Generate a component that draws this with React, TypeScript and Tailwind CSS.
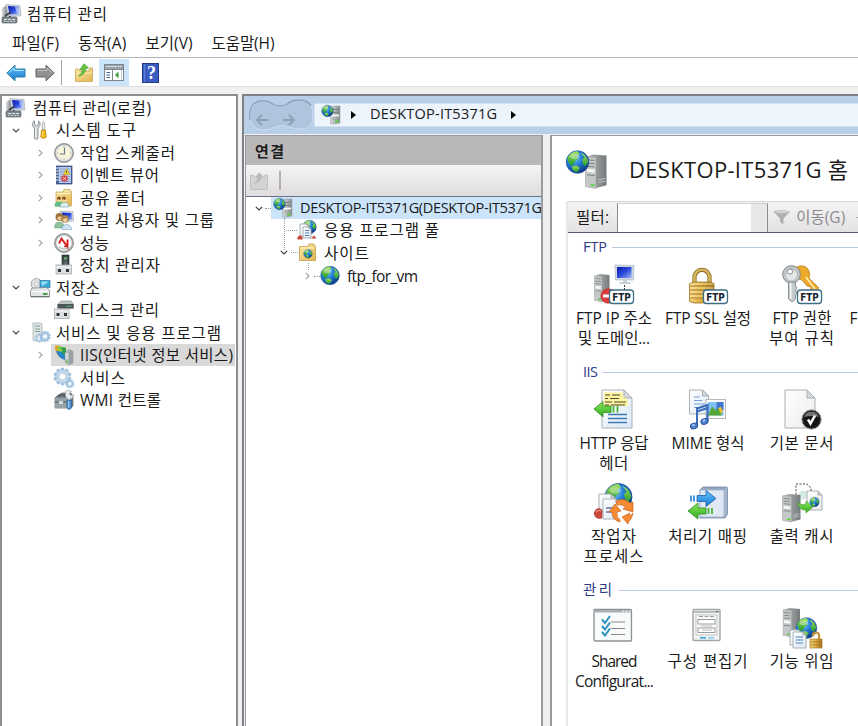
import React, { useLayoutEffect, useRef, useState } from "react";

/* ---------- text ---------- */

function Fit({ text, w, className = "" }: { text: string; w: number; className?: string }) {
  const ref = useRef<HTMLSpanElement>(null);
  const [spacing, setSpacing] = useState(0);
  useLayoutEffect(() => {
    if (ref.current && text.length > 1) {
      setSpacing((w + 1 - ref.current.getBoundingClientRect().width) / (text.length - 1));
    }
  }, [text, w]);
  return (
    <span ref={ref} className={"inline-block whitespace-pre " + className} style={{ letterSpacing: spacing }}>
      {text}
    </span>
  );
}

/* ---------- shared drawing parts ---------- */

function Defs() {
  return (
    <svg className="absolute h-0 w-0" aria-hidden="true">
      <defs>
        <radialGradient id="sea" cx="35%" cy="30%" r="75%">
          <stop offset="0" stopColor="#8fd8ff" />
          <stop offset=".45" stopColor="#2680d8" />
          <stop offset="1" stopColor="#0c3384" />
        </radialGradient>
        <linearGradient id="land" x1="0" y1="0" x2="0" y2="1">
          <stop offset="0" stopColor="#a4e05a" />
          <stop offset="1" stopColor="#1f9a32" />
        </linearGradient>
        <linearGradient id="steel" x1="0" y1="0" x2="1" y2="0">
          <stop offset="0" stopColor="#d9dcdc" />
          <stop offset="1" stopColor="#84898a" />
        </linearGradient>
        <linearGradient id="steelDark" x1="0" y1="0" x2="1" y2="0">
          <stop offset="0" stopColor="#b9bdbd" />
          <stop offset="1" stopColor="#747a7b" />
        </linearGradient>
        <linearGradient id="screen" x1="0" y1="0" x2="1" y2="1">
          <stop offset="0" stopColor="#0a1aa8" />
          <stop offset=".5" stopColor="#2b49dc" />
          <stop offset="1" stopColor="#9db8f8" />
        </linearGradient>
        <linearGradient id="brass" x1="0" y1="0" x2="1" y2="0">
          <stop offset="0" stopColor="#f3d684" />
          <stop offset=".5" stopColor="#d9a840" />
          <stop offset="1" stopColor="#a3741c" />
        </linearGradient>
        <linearGradient id="folder" x1="0" y1="0" x2="1" y2="1">
          <stop offset="0" stopColor="#fbe9a6" />
          <stop offset="1" stopColor="#e3b54e" />
        </linearGradient>
        <linearGradient id="greenArrow" x1="0" y1="0" x2="0" y2="1">
          <stop offset="0" stopColor="#8be85a" />
          <stop offset="1" stopColor="#2fa81e" />
        </linearGradient>
        <linearGradient id="blueArrow" x1="0" y1="0" x2="0" y2="1">
          <stop offset="0" stopColor="#63c4fa" />
          <stop offset="1" stopColor="#1778d2" />
        </linearGradient>
        <linearGradient id="paper" x1="0" y1="0" x2="1" y2="1">
          <stop offset="0" stopColor="#ffffff" />
          <stop offset="1" stopColor="#dbe9f6" />
        </linearGradient>
        <linearGradient id="blank" x1="0" y1="0" x2="1" y2="1">
          <stop offset="0" stopColor="#ffffff" />
          <stop offset="1" stopColor="#ececec" />
        </linearGradient>
      </defs>
    </svg>
  );
}

function Svg({ s, children }: { s: number; children: React.ReactNode }) {
  return (
    <svg width={s} height={s} viewBox={`0 0 ${s} ${s}`} className="block shrink-0 overflow-visible">
      {children}
    </svg>
  );
}

function Globe({ x, y, r }: { x: number; y: number; r: number }) {
  return (
    <g transform={`translate(${x} ${y}) scale(${r / 10})`}>
      <circle r="10" fill="url(#sea)" stroke="#1d4f96" strokeWidth=".6" />
      <path d="M-9-3C-8-7-4-9.500 0-9.600L2-7-1-5 1-3-2-1-3 2-6 3-8 0Z" fill="url(#land)" />
      <path d="M3-8C7-7 9-3 9.500 0L7 4 5 2 4-2 6-4Z" fill="url(#land)" />
      <path d="M-5 4-1 3 2 5 0 9C-3 9-5 7-5 4Z" fill="url(#land)" />
      <ellipse cx="-2.500" cy="-5" rx="4" ry="2.500" fill="#fff" opacity=".35" />
    </g>
  );
}

function Doc({ x, y, w, h, fill = "url(#paper)", c = 6 }: { x: number; y: number; w: number; h: number; fill?: string; c?: number }) {
  return (
    <g transform={`translate(${x} ${y})`} stroke="#a2a8ad" strokeWidth=".9" strokeLinejoin="round">
      <path d={`M0 0H${w - c}L${w} ${c}V${h}H0Z`} fill={fill} />
      <path d={`M${w - c} 0V${c}H${w}Z`} fill="#d6dadd" />
    </g>
  );
}

function Tower({ x, y, w, h }: { x: number; y: number; w: number; h: number }) {
  return (
    <g transform={`translate(${x} ${y}) scale(${w / 16} ${h / 32})`}>
      <path d="M0 2 6 0 16 1V29L7 32 0 30Z" fill="url(#steelDark)" />
      <path d="M0 2 8 3V32L0 30Z" fill="#c5c8c8" stroke="#9a9f9f" strokeWidth=".4" />
      <path d="M1 5l6 .7M1 8l6 .7M1 11l6 .7M1 19l6 .7" stroke="#7d8384" strokeWidth=".9" />
      <path d="M1 13.500l6 .7v3l-6-.7z" fill="#f6f6f6" />
      <path d="M10 24l5-1.500M10 26.500l5-1.500" stroke="#d1d6d6" strokeWidth=".7" />
      <rect x="4" y="28" width="3" height="1.800" fill="#54d43c" />
    </g>
  );
}

function FtpBadge({ x, y }: { x: number; y: number }) {
  return (
    <g>
      <rect x={x} y={y} width="24" height="13.500" rx="3" fill="#fff" stroke="#3d6e86" strokeWidth="1.300" />
      <text x={x + 12} y={y + 10.500} textAnchor="middle" fontFamily="DejaVu Sans, sans-serif" fontWeight="bold" fontSize="10" textLength="18.500" lengthAdjust="spacingAndGlyphs" fill="#14222c">
        FTP
      </text>
    </g>
  );
}

function Gear({ x, y, r, c = "#c3dbee" }: { x: number; y: number; r: number; c?: string }) {
  const teeth = [0, 36, 72, 108, 144, 180, 216, 252, 288, 324];
  return (
    <g transform={`translate(${x} ${y}) scale(${r / 10})`}>
      {teeth.map((a) => (
        <rect key={a} x="-1.800" y="-11" width="3.600" height="4" rx=".8" transform={`rotate(${a})`} fill="#a9c9e2" stroke="#7fa6c8" strokeWidth=".6" />
      ))}
      <circle r="6.500" fill="#fff" stroke={c} strokeWidth="4" />
      <circle r="8.600" fill="none" stroke="#8fb2d0" strokeWidth=".7" />
      <circle r="4.400" fill="#fff" stroke="#8fb2d0" strokeWidth=".8" />
    </g>
  );
}

/* ---------- 20px icons ---------- */

const ComputerIcon = () => (
  <Svg s={20}>
    <path d="M0 4 5 1V13H0Z" fill="url(#steel)" />
    <path d="M4 .5 18 1.500 19 12 6 12Z" fill="#d3d9e1" stroke="#9aa6b3" strokeWidth=".6" />
    <path d="M6 2 16.500 2.800 17.300 10.300 7.500 10.500Z" fill="url(#screen)" />
    <path d="M13 3l3.700.3.500 6.500-2 .2Z" fill="#b9ccff" opacity=".8" />
    <path d="M8 12 7 16M9 8 3 12" stroke="#3a4248" strokeWidth="2" />
    <rect x="0" y="13" width="15" height="6" rx="1" fill="#7e888f" stroke="#4b555c" strokeWidth=".6" />
    <path d="M2 15.500h3M6 15.500h3M10 15.500h3" stroke="#e0e4e6" />
    <path d="M2 17.500h11" stroke="#c4cacc" strokeDasharray="2 1" />
  </Svg>
);
const ToolsIcon = () => (
  <Svg s={20}>
    <path d="M4.500.8C1.500 2.500 2 7 4.500 8V18.500q1.800 1.500 3.500 0V8C10.500 6.500 11 2.500 8.500.8V4.500L6.400 5.500 4.500 4.500Z" fill="#d3d6d8" stroke="#7c8388" strokeWidth=".8" />
    <path d="M5.800 8v10" stroke="#f7f8f8" />
    <path d="M13.500 1.500 14.700 3V10h-2.400V3Z" fill="#e8ebec" stroke="#8a9094" strokeWidth=".6" />
    <path d="M11.500 10h4l.8 7q-2.800 3-5.600 0Z" fill="#f2b51c" stroke="#b87c08" strokeWidth=".7" />
    <path d="M12.800 11v6" stroke="#ffe38a" />
  </Svg>
);
const ClockIcon = () => (
  <Svg s={20}>
    <circle cx="10" cy="10" r="9.500" fill="#a3a7aa" stroke="#7c8184" strokeWidth=".8" />
    <circle cx="10" cy="10" r="7.600" fill="#f8f5da" stroke="#dfe1e2" strokeWidth="1.500" />
    <path d="M10.500 4.500V11H5.800" fill="none" stroke="#6c7a8e" strokeWidth="1.200" />
    <path d="M10 3v1.500M17 10h-1.500M10 17v-1.500M3 10h1" stroke="#999" strokeWidth=".8" />
  </Svg>
);
const EventIcon = () => (
  <Svg s={20}>
    <rect x="2.500" y="1" width="15.500" height="18" fill="#48659c" stroke="#2a4475" strokeWidth=".7" />
    <rect x="5" y="2" width="12" height="16" fill="#b9caea" />
    <path d="M6 4h10M6 6.500h10M6 9h10M6 11.500h10M6 14h10M6 16.500h10" stroke="#7f9ace" strokeWidth=".8" />
    <path d="M2 3h3M2 6h3M2 9h3M2 12h3M2 15h3" stroke="#e8e8e8" strokeWidth="1.200" />
    <path d="M12.500 3.500 15.500 9.500H9.500Z" fill="#f7d32b" stroke="#c7a32a" strokeWidth=".6" />
    <path d="M12.500 5.500v2.500" stroke="#444" strokeWidth=".8" />
    <circle cx="10.500" cy="13.500" r="3.200" fill="#d44545" />
    <path d="M9.200 12.200l2.600 2.600M11.800 12.200l-2.600 2.600" stroke="#fff" strokeWidth=".9" />
  </Svg>
);
const SharedIcon = () => (
  <Svg s={20}>
    <path d="M2 4H9l1-2.500h6l1.500 2.500V18H2Z" fill="url(#folder)" stroke="#c49f4c" strokeWidth=".7" />
    <path d="M3 5.500h14M11 3h5" stroke="#fff7d5" />
    <circle cx="5" cy="10.500" r="2" fill="#8a5524" />
    <circle cx="10" cy="10.500" r="2" fill="#8a5524" />
    <path d="M4 11.500q1.500 3 3 0M9 11.500q1.500 3 3 0" stroke="#fbe0b0" strokeWidth="1.500" fill="none" />
    <path d="M.5 18.500q0-5 4.500-5t4.500 5Z" fill="#5ebd8a" />
    <path d="M6 19q0-4.500 4.500-4.500T15 19Z" fill="#dff0f0" stroke="#6aa6a0" strokeWidth=".6" />
  </Svg>
);
const UsersIcon = () => (
  <Svg s={20}>
    <path d="M6 1 19 1.500 19.500 11 8 12Z" fill="#d3d9e1" stroke="#9aa6b3" strokeWidth=".6" />
    <path d="M8 2.500 17.500 3l.5 6.500L9 10.500Z" fill="url(#screen)" />
    <circle cx="5.500" cy="7" r="4" fill="#9a7440" />
    <path d="M3 8q2.500 5 5 0L7.500 6.500H4.500Z" fill="#ecc592" />
    <circle cx="11" cy="9" r="3.800" fill="#a8834a" />
    <path d="M8.500 9.500q2.500 6 5 0L12.500 8Z" fill="#f0d0a0" />
    <path d="M.5 18q0-6 4.500-6t6 6Z" fill="#8cc29d" stroke="#5d9a70" strokeWidth=".5" />
    <path d="M8 19.500Q8 14.500 12.500 14.500t5.500 5Z" fill="#cfe4f2" stroke="#7ba4bf" strokeWidth=".6" />
  </Svg>
);
const PerfIcon = () => (
  <Svg s={20}>
    <circle cx="10" cy="10" r="9.500" fill="#a5aaac" stroke="#84898c" strokeWidth=".8" />
    <circle cx="10" cy="10" r="7.500" fill="#fdfdfd" stroke="#dfe1e2" />
    <path d="M5 10.500 7.500 5.500 13.500 14V6.500" fill="none" stroke="#d81e1e" strokeWidth="1.900" />
    <path d="M10 13.500h4" stroke="#d81e1e" strokeWidth="1.300" />
    <path d="M5 14q5 4 10 0" stroke="#9fb3a2" fill="none" />
  </Svg>
);
const DeviceIcon = () => (
  <Svg s={20}>
    <rect x="8" y="0" width="7" height="11" fill="#3b4447" stroke="#23292b" strokeWidth=".6" />
    <rect x="10" y="2" width="3" height="3" fill="#5f9a6a" />
    <path d="M9.500 7h4M9.500 9h4" stroke="#7d8786" />
    <rect x="2" y="10" width="15.500" height="9" fill="#dcdfe0" stroke="#a5aaad" strokeWidth=".8" />
    <path d="M2 12h15.500" stroke="#f8f8f8" />
    <rect x="4" y="14" width="3" height="3" fill="#30363a" />
    <rect x="12" y="14" width="3" height="3" fill="#30363a" />
  </Svg>
);
const StorageIcon = () => (
  <Svg s={20}>
    <circle cx="6.500" cy="6" r="5.500" fill="#dde0de" stroke="#989d9b" strokeWidth=".8" />
    <circle cx="6.500" cy="6" r="1.700" fill="#fff" stroke="#aaa" strokeWidth=".6" />
    <rect x="10" y="2.500" width="10" height="7" fill="#39a9dd" stroke="#23749e" strokeWidth=".7" />
    <path d="M11 3.500h8L12 8Z" fill="#9ddcf5" />
    <path d="M2 10 17 9.500 19.500 13V18.500H.5V13Z" fill="#e3e6e6" stroke="#7f8789" strokeWidth=".8" />
    <path d="M1 13.500h18" stroke="#fff" />
    <path d="M1 18.800h18.500" stroke="#5d6769" />
    <rect x="13" y="15" width="4.500" height="2" fill="#43a04b" />
  </Svg>
);
const DiskIcon = () => (
  <Svg s={20}>
    <path d="M4 4 7 1H17L19.500 4V8H4Z" fill="#c0c6c6" stroke="#8b9494" strokeWidth=".7" />
    <rect x="3.500" y="4" width="16" height="4.500" fill="#4b5556" />
    <path d="M12 6.200h5.500" stroke="#58a070" strokeWidth="1.300" />
    <rect x=".5" y="9" width="14.500" height="9.500" fill="#dcdfe0" stroke="#a5aaad" strokeWidth=".8" />
    <path d="M.5 11H15" stroke="#f8f8f8" />
    <rect x="2.500" y="13" width="3" height="3" fill="#30363a" />
    <rect x="10" y="13" width="3" height="3" fill="#30363a" />
  </Svg>
);
const AppsIcon = () => (
  <Svg s={20}>
    <path d="M3 0h8l1 1V17l-8 1-1-1Z" fill="#dfe5e6" stroke="#9caaad" strokeWidth=".7" />
    <path d="M5 3h5M5 6h5M5 8.500h5" stroke="#78a18f" />
    <Gear x={9.500} y={15} r={4} />
    <Gear x={15} y={13.500} r={5} c="#a9cae4" />
  </Svg>
);
const IisIcon = () => (
  <Svg s={20}>
    <path d="M1 1 5 0 6 12Q1 9 1 1Z" fill="#e89c2b" />
    <path d="M3 1 12 2.500V8L4 7Z" fill="#8ccc3a" />
    <path d="M2 6 11 7V15Q4 13 2 6Z" fill="#2586cb" />
    <path d="M5 2q5 2 3 7l4 1V3Z" fill="#2d9c50" />
    <path d="M11 8 15 4.500l4 2V18l-5 2-3-3Z" fill="url(#steel)" stroke="#8c9496" strokeWidth=".6" />
    <path d="M15 7l4-1V18l-4 2Z" fill="#9aa1a3" />
    <path d="M12 9l2.500 1M12 12l2.500 1" stroke="#f2f2f2" />
    <rect x="12" y="15.500" width="2" height="2" fill="#5dc648" />
  </Svg>
);
const ServicesIcon = () => (
  <Svg s={20}>
    <Gear x={8.500} y={8.500} r={7.800} />
    <Gear x={15.800} y={15.800} r={3.900} c="#a9cae4" />
  </Svg>
);
const WmiIcon = () => (
  <Svg s={20}>
    <path d="M3 6 8 3h9l2 3V16L16 18H1V8Z" fill="#76828a" stroke="#5a656c" strokeWidth=".7" />
    <path d="M1 8h14v10H1Z" fill="#97a2a8" />
    <path d="M1 12h14" stroke="#4c565c" />
    <rect x="5" y="11" width="4" height="3" fill="#d4dadd" />
    <path d="M5 7V5h6v2" fill="none" stroke="#3d454a" />
    <path d="M11.500 1.500q3-3 6 0l-2 2 1 2 3-1q0 4-3 4v3h-2.500V9q-3.500-2-2.500-5Z" fill="#e9eced" stroke="#8d9498" strokeWidth=".6" />
    <path d="M13 10h4.500v8q-2.200 3-4.500 0Z" fill="#4a89cc" stroke="#285b94" strokeWidth=".6" />
    <path d="M14.700 11v7" stroke="#b9dbfa" />
  </Svg>
);
const ServerGlobeIcon = () => (
  <Svg s={20}>
    <path d="M8.500 2.500 11 1h7V18l-4 1H8.500Z" fill="url(#steel)" stroke="#a0a6a7" strokeWidth=".6" />
    <path d="M11 4.500h6M11 7.500h6" stroke="#7a8283" />
    <path d="M10 10.500h7" stroke="#fff" strokeWidth="1.500" />
    <path d="M10 14h7" stroke="#96a092" />
    <rect x="13" y="15.500" width="4" height="2" fill="#69c94f" />
    <Globe x={5.500} y={6} r={5.800} />
  </Svg>
);
const PoolIcon = () => (
  <Svg s={20}>
    <Globe x={12.500} y={7} r={6.800} />
    <Doc x={3} y={4} w={9} h={12} c={2} />
    <Doc x={6} y={7} w={8} h={11} c={2} />
    <path d="M8 10.500h4M8 13h4M8 15.500h4" stroke="#5a80b8" />
    <path d="M0 18.500q2-5 5.500-1.500v2.500H1ZM14 18.500l3-3 2.500 3Z" fill="#c9493e" />
  </Svg>
);
const SitesIcon = () => (
  <Svg s={20}>
    <path d="M1.500 3.500H10l1-2.500h5l1.500 2.500V17.500H1.500Z" fill="url(#folder)" stroke="#c49f4c" strokeWidth=".8" />
    <path d="M3 5h13" stroke="#fff8d6" />
    <Globe x={10} y={10.800} r={4.300} />
  </Svg>
);
const GlobeIcon = () => (
  <Svg s={20}>
    <Globe x={10} y={9.500} r={9.300} />
  </Svg>
);

/* ---------- toolbar icons ---------- */

const BigArrow = ({ blue }: { blue?: boolean }) => (
  <svg width="20" height="18" viewBox="0 0 20 18" className={blue ? "block" : "block -scale-x-100"}>
    <path d="M.8 9 9 1.200V5h10v8H9v3.800Z" fill={blue ? "url(#blueArrow)" : "#929292"} stroke={blue ? "#2d7ea5" : "#666"} strokeLinejoin="round" />
    <path d="M3 8.500 8 4v2.500h9.500" fill="none" stroke={blue ? "#a8e5ff" : "#c2c2c2"} />
  </svg>
);
const UpFolder = () => (
  <svg width="18" height="20" viewBox="0 0 18 20" className="block">
    <path d="M.5 6H4l1 2h9l1-3h2.500V18.500H.5Z" fill="url(#folder)" stroke="#c9ac60" strokeWidth=".9" />
    <path d="M1.500 10h15.500" stroke="#f9ebb4" />
    <path d="M3.500 13Q7 11 7.500 6.500L5 6.500 9 .8 13.500 5 11 5.500Q10 12 3.500 13Z" fill="#63c63f" stroke="#4a9d30" strokeWidth=".7" />
  </svg>
);
const ConsoleIcon = () => (
  <svg width="20" height="17" viewBox="0 0 20 17" className="block">
    <rect x=".5" y=".5" width="19" height="16" fill="#fff" stroke="#7d8890" />
    <rect x="1" y="1" width="18" height="4" fill="#98a3ac" />
    <path d="M2 2.500h11" stroke="#d6dde1" />
    <path d="M14 2.500h1M16 2.500h1" stroke="#fff" />
    <path d="M0 5.500h20M8.500 5v11" stroke="#7d8890" />
    <path d="M2.500 8.500H6M2.500 11H6M2.500 13.500H6" stroke="#3d6490" strokeWidth="1.200" />
    <path d="M11 11 14.500 7.500V14.500Z" fill="#36a339" />
    <path d="M17.500 6v10" stroke="#c5cdd2" />
  </svg>
);
const HelpIcon = () => (
  <svg width="17" height="20" viewBox="0 0 17 20" className="block">
    <rect x=".5" y=".5" width="16" height="19" fill="#3a5bc0" stroke="#1f3888" />
    <path d="M2.500 1v18" stroke="#5f7fd4" strokeWidth="1.200" />
    <text x="9.500" y="16" textAnchor="middle" fontFamily="Liberation Serif, serif" fontWeight="bold" fontSize="18" fill="#fff">
      ?
    </text>
  </svg>
);

/* ---------- 40px feature icons ---------- */

const FtpIp = () => (
  <Svg s={40}>
    <Tower x={0.5} y={9} w={15} h={28} />
    <path d="M21 0 40 .5 39.500 15H21.500Z" fill="#cfd8e2" stroke="#b4bec8" strokeWidth=".8" />
    <rect x="23" y="2" width="14.500" height="11" fill="url(#screen)" />
    <path d="M29 15h4v2h3l1 2H25l1-2h3Z" fill="#c6cfd6" />
    <path d="M30.500 20v5" stroke="#333" strokeDasharray="2 1" />
    <circle cx="14" cy="31" r="7.200" fill="#dc3a3a" stroke="#b92f2f" strokeWidth=".7" />
    <rect x="9" y="29.500" width="9" height="3" fill="#fff" />
    <FtpBadge x={15.500} y={25} />
  </Svg>
);
const FtpSsl = () => (
  <Svg s={40}>
    <path d="M6.500 19V11a8 9.500 0 0 1 15 0v8" fill="none" stroke="#8d6a1e" strokeWidth="4.200" />
    <path d="M6.500 19V11a8 9.500 0 0 1 15 0v8" fill="none" stroke="#d4b55c" strokeWidth="2.600" />
    <path d="M1.500 18.500 6 17H22L26 18.500V36.500L22 38H6L1.500 36.500Z" fill="url(#brass)" stroke="#9b7220" strokeWidth=".8" />
    <path d="M2 21h23.500M2 25h23.500M2 29h23.500M2 33h23.500" stroke="#a67920" strokeWidth=".8" />
    <path d="M2 19h23.500M2 23h23.500M2 27h23.500M2 31h23.500" stroke="#fff0af" strokeWidth=".8" />
    <FtpBadge x={15.500} y={25} />
  </Svg>
);
const FtpAuth = () => (
  <Svg s={40}>
    <path d="M13 3q8-5 13 1 3 5 1 9l10 10-4 4-4-1v-4l-4-1-5-6q-6-1-7-8Z" fill="#eda92b" stroke="#c08428" strokeWidth=".8" />
    <path d="M24 12l9 12" stroke="#fff0ac" strokeWidth="1.500" />
    <circle cx="9.500" cy="9.500" r="8.800" fill="#c4cacc" stroke="#7d8488" />
    <circle cx="9.500" cy="10" r="6" fill="#e3e7e8" stroke="#a9afb2" strokeWidth=".8" />
    <circle cx="8" cy="6.500" r="2.600" fill="#fff" stroke="#747c80" strokeWidth=".9" />
    <path d="M6.500 17h7v4l1.500 2-1.500 2 1.500 3-1.500 2v4L10 37l-3.500-3Z" fill="#c5cacd" stroke="#83898d" strokeWidth=".9" />
    <path d="M8.800 18v16" stroke="#f5f6f6" strokeWidth="1.500" />
    <FtpBadge x={15.500} y={25} />
  </Svg>
);
const HttpIcon = () => (
  <Svg s={40}>
    <Doc x={8} y={0} w={30} h={38} c={8} />
    <path d="M10 2.500H29V7l5 2.500V16H10Z" fill="#fff4a0" />
    <path d="M11 5h5M18 5h8M11 8.500h3M16 8.500h9M11 12h7M20 12h12M11 15h4M17 15h14" stroke="#4a482c" strokeWidth="1.200" />
    <path d="M14 24.500h19M14 28.500h19M14 32.500h19" stroke="#3e7ab4" strokeWidth="1.300" />
    <path d="M0 19 9 11.500V16h8v6.500H9V27Z" fill="url(#greenArrow)" stroke="#2a8b1d" strokeWidth=".8" />
    <path d="M19.500 16v6.500M23.500 16v6.500" stroke="#41b52c" strokeWidth="1.700" />
  </Svg>
);
const MimeIcon = () => (
  <Svg s={40}>
    <Doc x={1.500} y={0} w={19} h={24} c={6} />
    <path d="M6 7h6M6 10.500h8M6 14h11M6 17.500h6" stroke="#7ba3d6" strokeWidth="1.200" />
    <rect x="18" y="9.500" width="19.500" height="19" fill="#fbfbfb" stroke="#b4b9bc" />
    <rect x="20" y="12" width="15.500" height="13.500" fill="#80c1f4" />
    <path d="M29 12h6.500v8H28Z" fill="#3f78cd" />
    <path d="M20 25.500l4-9 4 4 3-2 3 7Z" fill="#57a735" />
    <path d="M30 18l3-1 2 4-2 3Z" fill="#e7be31" />
    <path d="M9 18.500 19.500 15V31" fill="none" stroke="#3d6cba" strokeWidth="2.200" />
    <path d="M9 17v19M9 21.500l10.500-3.500" stroke="#3d6cba" strokeWidth="2" />
    <ellipse cx="6" cy="36" rx="3.600" ry="2.800" transform="rotate(-20 6 36)" fill="#4f80d0" stroke="#28519b" />
    <ellipse cx="16.500" cy="31.500" rx="3.600" ry="2.800" transform="rotate(-20 16.500 31.500)" fill="#4f80d0" stroke="#28519b" />
    <path d="M4.500 35.500l2-1M15 31l2-1" stroke="#b8d7ff" strokeWidth="1.500" />
  </Svg>
);
const DefaultDocIcon = () => (
  <Svg s={40}>
    <Doc x={3} y={0} w={30} h={38} c={8} fill="url(#blank)" />
    <circle cx="29.500" cy="29.500" r="9.700" fill="#222" stroke="#a1a1a1" />
    <circle cx="29.500" cy="29.500" r="8" fill="#151515" />
    <path d="M22 27a8 8 0 0 1 15 0q-7-2-15 0" fill="#737373" />
    <path d="M26 29.500l2.500 4 4.500-8" fill="none" stroke="#fff" strokeWidth="2.500" />
  </Svg>
);
const WorkerIcon = () => (
  <Svg s={40}>
    <Globe x={24.500} y={14} r={13.500} />
    <Doc x={5} y={11} w={16} h={18} c={4} />
    <Doc x={9} y={16} w={17} h={20} c={4} />
    <path d="M12 25h9M12 29h9" stroke="#6d6fa8" strokeWidth="1.300" />
    <path d="M0 30q3-7 8-3v8Q1 37 0 30Z" fill="#c9493f" stroke="#a33630" strokeWidth=".6" />
    <path d="M2 29q3-3 5-1" stroke="#f5aaa0" fill="none" />
    <circle cx="28" cy="28" r="8" fill="#fff" opacity=".95" />
    <path d="M22 18q8-4 14 2l3-1v10l-10-3 3-2q-4-3-9-2Z" fill="#f68a30" stroke="#c9651f" strokeWidth=".7" />
    <path d="M39 30q-1 6-4 8l-1 3-6-7 8-4-1 3q3-1 4-3Z" fill="#f68a30" stroke="#c9651f" strokeWidth=".7" />
    <path d="M26 39q-8-2-8-10l-3 0 6-8 6 7-4 1q-1 5 3 8Z" fill="#f68a30" stroke="#c9651f" strokeWidth=".7" />
  </Svg>
);
const HandlerIcon = () => (
  <Svg s={40}>
    <path d="M12 7 15 4H39L39.500 6V31L37 35H12Z" fill="#93a7c2" stroke="#7189a8" strokeWidth=".8" />
    <rect x="12" y="7" width="24" height="27" rx="1" fill="#dfe8f4" stroke="#9fb2ca" strokeWidth=".8" />
    <path d="M36 7l3-3V31l-3 3Z" fill="#a4b5cc" />
    <path d="M9 12.500H18V7.500L28 15.500 18 23.500V18.500H9Z" fill="url(#blueArrow)" stroke="#165eaa" strokeWidth=".8" />
    <path d="M3 12.500v6M6 12.500v6" stroke="#2c86d6" strokeWidth="1.700" />
    <path d="M18 25H10V20L0 28l10 8V31h8Z" fill="url(#greenArrow)" stroke="#2a8b1d" strokeWidth=".8" />
    <path d="M20.500 25v6M24 25v6" stroke="#41b52c" strokeWidth="1.700" />
  </Svg>
);
const CacheIcon = () => (
  <Svg s={40}>
    <path d="M14 1h11l4 4v19H14Z" fill="#fff" stroke="#444" strokeDasharray="2 1.500" />
    <circle cx="21" cy="12" r="4.500" fill="#d5ebe3" />
    <Doc x={25} y={8} w={15} h={19} c={4} fill="url(#blank)" />
    <Globe x={32.500} y={19} r={4.800} />
    <Tower x={0.5} y={11} w={18} h={28} />
    <path d="M16 20q4 3 8 1v-3l7 6-7 6v-3q-6 1-8-7Z" fill="url(#greenArrow)" stroke="#4aa13a" strokeWidth=".7" />
  </Svg>
);
const SharedConfigIcon = () => (
  <Svg s={40}>
    <rect x="0" y="1.500" width="37.500" height="31.500" rx="1" fill="#f9fafa" stroke="#8b9296" strokeWidth="1.300" />
    <rect x="1" y="2" width="36" height="2.500" fill="#a9b0b4" />
    <path d="M28 3.200h2M31.500 3.200h2M35 3.200h1.500" stroke="#fff" />
    <path d="M17 14h14M17 20.500h14M17 26.500h14" stroke="#888" strokeWidth="1.100" />
    <path d="M8 11.500l3 3.500 5-7M8 18l3 3.500 5-7M8 24l3 3.500 5-7" fill="none" stroke="#2f8fc0" strokeWidth="2" />
  </Svg>
);
const ConfigIcon = () => (
  <Svg s={40}>
    <rect x="5" y="1.500" width="27" height="31" rx="1" fill="#f3f4f4" stroke="#a1a6a8" strokeWidth="1.400" />
    <path d="M6 4h25" stroke="#b9bec0" strokeWidth="2" />
    <path d="M28 3.500h2" stroke="#555" />
    <rect x="8" y="7" width="21" height="20" fill="#fafafa" stroke="#c2c5c6" />
    <path d="M11 8.500h15" stroke="#9a9da0" strokeDasharray="4 1.500" />
    <rect x="10" y="11.500" width="17" height="4.500" fill="#fff" stroke="#909496" strokeWidth=".9" />
    <rect x="10" y="20" width="17" height="4.500" fill="#fff" stroke="#909496" strokeWidth=".9" />
    <path d="M14 22.200h10M13 18h11" stroke="#b8bbbd" />
    <path d="M12 29.800h6" stroke="#3da9df" strokeWidth="1.700" />
    <path d="M20 29.800h6" stroke="#8accec" strokeWidth="1.700" />
  </Svg>
);
const DelegationIcon = () => (
  <Svg s={40}>
    <Tower x={1} y={0} w={17} h={29} />
    <Globe x={24.500} y={20} r={10.300} />
    <Doc x={8} y={22} w={12} h={15} c={3} />
    <Doc x={11} y={24} w={13} h={16} c={3} />
    <path d="M13.500 29h7.500M13.500 32h7.500M13.500 35h7.500" stroke="#4b80c0" strokeWidth="1.200" />
    <path d="M31 28.500V27.500q0-3 3-3t3 3v5" fill="none" stroke="#c0913a" strokeWidth="2.200" />
    <rect x="28" y="31" width="12" height="9" fill="url(#brass)" stroke="#a97c2a" strokeWidth=".7" />
    <path d="M28 34h12M28 37h12" stroke="#9e7019" strokeWidth=".7" />
  </Svg>
);

/* ---------- trees ---------- */

function Chevron({ open }: { open: boolean }) {
  return open ? (
    <svg width="8" height="5" viewBox="0 0 8 5" className="block shrink-0">
      <path d="M.8.8 4 4 7.200.8" fill="none" stroke="#404040" strokeWidth="1.200" />
    </svg>
  ) : (
    <svg width="5" height="8" viewBox="0 0 5 8" className="block shrink-0">
      <path d="M.8.8 4 4 .8 7.200" fill="none" stroke="#a0a0a0" strokeWidth="1.200" />
    </svg>
  );
}

const indents = ["pl-[6px]", "pl-[6px]", "pl-[30px]"];

const leftTree: { t: string; w: number; lv: number; open?: boolean; icon: () => React.JSX.Element; sel?: boolean }[] = [
  { t: "컴퓨터 관리(로컬)", w: 117, lv: 0, icon: ComputerIcon },
  { t: "시스템 도구", w: 79, lv: 1, open: true, icon: ToolsIcon },
  { t: "작업 스케줄러", w: 94, lv: 2, open: false, icon: ClockIcon },
  { t: "이벤트 뷰어", w: 78, lv: 2, open: false, icon: EventIcon },
  { t: "공유 폴더", w: 64, lv: 2, open: false, icon: SharedIcon },
  { t: "로컬 사용자 및 그룹", w: 133, lv: 2, open: false, icon: UsersIcon },
  { t: "성능", w: 28, lv: 2, open: false, icon: PerfIcon },
  { t: "장치 관리자", w: 79, lv: 2, icon: DeviceIcon },
  { t: "저장소", w: 43, lv: 1, open: true, icon: StorageIcon },
  { t: "디스크 관리", w: 78, lv: 2, icon: DiskIcon },
  { t: "서비스 및 응용 프로그램", w: 164, lv: 1, open: true, icon: AppsIcon },
  { t: "IIS(인터넷 정보 서비스)", w: 152, lv: 2, open: false, icon: IisIcon, sel: true },
  { t: "서비스", w: 44, lv: 2, icon: ServicesIcon },
  { t: "WMI 컨트롤", w: 80, lv: 2, icon: WmiIcon },
];

function LeftTree() {
  return (
    <div className="flex w-[238px] shrink-0 flex-col border-2 border-b-0 border-[#8b8e93] bg-white pt-[0.500px]">
      {leftTree.map((n) => (
        <div key={n.t} className={"-ml-[2px] flex h-[22.500px] items-center gap-[7px] " + indents[n.lv]}>
          {n.lv > 0 && (
            <span className="flex w-[20px] shrink-0 justify-center">{n.open !== undefined && <Chevron open={n.open} />}</span>
          )}
          <div
            className={
              "flex h-[22px] items-center " +
              (n.sel ? "-ml-[6px] w-[184px] bg-[#d9d9d9] pl-[3px]" : n.lv === 0 ? "" : "-ml-[3px]") +
              (n.lv === 0 ? " gap-[7px]" : " gap-[6px]")
            }
          >
            <n.icon />
            <Fit text={n.t} w={n.w} className="leading-[22px]" />
          </div>
        </div>
      ))}
    </div>
  );
}

const Dots = ({ className }: { className: string }) => <span className={"shrink-0 border-dotted border-[#9a9a9a] " + className} />;

function Connections() {
  return (
    <div className="flex w-[298px] shrink-0 flex-col border border-b-0 border-r-2 border-[#9b9b9d] bg-white">
      <div className="flex h-[29px] items-center bg-[#b9b7b7] pl-[9px] text-[15px] font-bold text-[#1c1c1c]">
        <Fit text="연결" w={28} />
      </div>
      <div className="flex h-[32px] items-center gap-[11px] border-b border-[#6a7386] bg-gradient-to-b from-[#f6f5f5] to-[#dedcdd] pl-[4px]">
        <svg width="18" height="18" viewBox="0 0 18 18">
          <path d="M.5 3.500H4l1 2h9l1-2.500h2.500v14.500H.5Z" fill="#d4d2d2" stroke="#c2c0c0" />
          <path d="M3.500 12Q7.500 10 7.500 5H5.500L9 .5 13.500 4.500 11.500 5Q10.500 11 3.500 12Z" fill="#b9b7b7" />
        </svg>
        <span className="h-[19px] w-[2px] bg-[#b9b2aa]" />
      </div>
      <div className="relative flex flex-col">
        <div className="flex h-[22px] items-center overflow-hidden pl-[9px]">
          <Chevron open />
          <Dots className="ml-[2px] w-[6px] border-t" />
          <div className="flex h-[22px] flex-1 items-center gap-[6px] bg-[#cce4f9] pl-[3px]">
            <ServerGlobeIcon />
            <Fit text="DESKTOP-IT5371G(DESKTOP-IT5371G" w={241} className="text-[14.500px]" />
          </div>
        </div>
        <div className="flex h-[22px] items-center pl-[40px]">
          <Dots className="w-[11px] border-t" />
          <PoolIcon />
          <Fit text="응용 프로그램 풀" w={114} className="ml-[7px]" />
        </div>
        <div className="flex h-[23px] items-center pl-[34px]">
          <Chevron open />
          <Dots className="ml-[3px] w-[7px] border-t" />
          <SitesIcon />
          <Fit text="사이트" w={44} className="ml-[6px]" />
        </div>
        <div className="flex h-[24px] items-center pl-[59px]">
          <Chevron open={false} />
          <Dots className="ml-[4px] w-[6px] border-t" />
          <GlobeIcon />
          <Fit text="ftp_for_vm" w={70} className="ml-[7px]" />
        </div>
        <Dots className="absolute left-[38px] top-[21px] h-[32px] border-l" />
        <Dots className="absolute left-[62px] top-[66px] h-[7px] border-l" />
      </div>
    </div>
  );
}

/* ---------- features ---------- */

type Item = { icon: () => React.JSX.Element; lines: [string, number][] };

const groups: { name: string; w: number; rows: Item[][]; partial?: boolean }[] = [
  {
    name: "FTP",
    w: 23,
    partial: true,
    rows: [
      [
        { icon: FtpIp, lines: [["FTP IP 주소", 75], ["및 도메인...", 71]] },
        { icon: FtpSsl, lines: [["FTP SSL 설정", 85]] },
        { icon: FtpAuth, lines: [["FTP 권한", 58], ["부여 규칙", 64]] },
      ],
    ],
  },
  {
    name: "IIS",
    w: 14,
    rows: [
      [
        { icon: HttpIcon, lines: [["HTTP 응답", 68], ["헤더", 28]] },
        { icon: MimeIcon, lines: [["MIME 형식", 72]] },
        { icon: DefaultDocIcon, lines: [["기본 문서", 63]] },
      ],
      [
        { icon: WorkerIcon, lines: [["작업자", 44], ["프로세스", 59]] },
        { icon: HandlerIcon, lines: [["처리기 매핑", 78]] },
        { icon: CacheIcon, lines: [["출력 캐시", 63]] },
      ],
    ],
  },
  {
    name: "관리",
    w: 28,
    rows: [
      [
        { icon: SharedConfigIcon, lines: [["Shared", 45], ["Configurat...", 78]] },
        { icon: ConfigIcon, lines: [["구성 편집기", 79]] },
        { icon: DelegationIcon, lines: [["기능 위임", 63]] },
      ],
    ],
  },
];

function Features() {
  return (
    <div className="flex min-w-0 flex-1 flex-col overflow-hidden border-l-2 border-t border-[#9b9b9d] bg-white pl-[14px]">
      <div className="flex h-[65px] shrink-0 items-center pt-px">
        <Svg s={40}>
          <Tower x={19.500} y={5.500} w={21} h={34} />
          <Globe x={11.500} y={13} r={11.300} />
        </Svg>
        <Fit text="DESKTOP-IT5371G 홈" w={218} className="ml-[23px] text-[22px] leading-[30px]" />
      </div>
      <div className="flex flex-1 flex-col border-l-2 border-[#e7e7e9]">
        <div className="flex h-[32px] shrink-0 items-center border-b border-t border-b-[#5b5478] border-t-[#d5d5d7] bg-gradient-to-b from-[#f5f4f5] to-[#e3e1e3] pl-[8px]">
          <Fit text="필터:" w={32} className="-mt-px" />
          <div className="ml-[8px] flex h-[29px] w-[151px] shrink-0 justify-end self-end border-l border-r border-t border-l-[#8d8d8d] border-r-[#8d8d8d] border-t-[#d0d0d0] bg-white">
            <span className="w-[16px] bg-[#e9e8e9]" />
          </div>
          <svg width="18" height="16" viewBox="0 0 18 16" className="ml-[5px] shrink-0">
            <path d="M.5 2.500Q8-.5 17 2.500L10.500 9.500V15.500L7 13V9.500Z" fill="#b1afb0" />
            <ellipse cx="8.800" cy="2.800" rx="6.500" ry="1.500" fill="#d5d3d4" />
          </svg>
          <Fit text="이동(G)" w={48} className="-mt-px ml-[5px] text-[#8d8d8d]" />
          <span className="ml-[11px] h-px w-[2px] bg-[#aaa]" />
        </div>
        <div className="flex flex-col pt-[4px]">
          {groups.map((g) => (
            <section key={g.name} className="flex flex-col pb-[4px]">
              <div className="flex h-[20px] items-center gap-[5px] pl-[15px] text-[14.500px] text-[#2d3b87]">
                <Fit text={g.name} w={g.w} />
                <span className="h-px flex-1 bg-[#b9c9df]" />
              </div>
              <div className="-ml-[1.500px] flex flex-col pt-[8px]">
                {g.rows.map((row, i) => (
                  <div key={i} className="flex h-[93px]">
                    {row.map((it) => (
                      <div key={it.lines[0][0]} className="flex w-[94px] shrink-0 flex-col items-center">
                        <it.icon />
                        <div className="mt-[3px] flex flex-col items-center pl-px">
                          {it.lines.map(([t, w]) => (
                            <Fit key={t} text={t} w={w} className="h-[20px] leading-[20px]" />
                          ))}
                        </div>
                      </div>
                    ))}
                    {g.partial && <div className="mt-[43px] pl-px leading-[20px]">F</div>}
                  </div>
                ))}
              </div>
            </section>
          ))}
        </div>
      </div>
    </div>
  );
}

/* ---------- window ---------- */

export default function App() {
  return (
    <div className="flex h-[726px] w-[858px] flex-col overflow-hidden bg-[#f0f0f0] font-['Open_Sans','Noto_Sans_CJK_KR',sans-serif] text-[15.500px] leading-[22px] text-[#1a1a1a]">
      <Defs />
      <div className="flex h-[28px] shrink-0 items-center gap-[5px] bg-white pl-[2px]">
        <ComputerIcon />
        <Fit text="컴퓨터 관리" w={79} />
      </div>
      <div className="flex h-[30px] shrink-0 items-center border-b border-[#b3b3b3] bg-white pl-[12px]">
        <Fit text="파일(F)" w={46} />
        <Fit text="동작(A)" w={47} className="ml-[19px]" />
        <Fit text="보기(V)" w={46} className="ml-[19px]" />
        <Fit text="도움말(H)" w={62} className="ml-[19px]" />
      </div>
      <div className="flex h-[29px] shrink-0 items-center border-b border-[#e2e2e2] bg-white pl-[6px] pt-px">
        <BigArrow blue />
        <span className="w-[9px]" />
        <BigArrow />
        <span className="ml-[6px] h-[25px] w-px bg-[#a0a0a0]" />
        <span className="w-[13px]" />
        <UpFolder />
        <span className="ml-[6px] flex h-[27px] w-[30px] items-center justify-center bg-[#cce4f9]">
          <ConsoleIcon />
        </span>
        <span className="w-[13px]" />
        <HelpIcon />
      </div>
      <div className="flex min-h-0 flex-1 pt-[7px]">
        <LeftTree />
        <div className="ml-[4px] flex min-w-0 flex-1 flex-col border-l-2 border-t-2 border-[#7c8087]">
          <div className="flex h-[38px] shrink-0 items-center bg-[#b9cfe8] pl-[4px]">
            <svg width="66" height="34" viewBox="0 0 66 34" className="block shrink-0">
              <path d="M2 20Q2 4 13 3q7-1 12 3 7 4 14 0 5-4 12-4 14 0 14 16 0 13-12 13-7 0-12-2-7-3-14 0-4 3-12 3Q4 32 2 20Z" fill="#afc5de" stroke="#cbdcef" />
              <path d="M2 22Q0 4 13 3q7-1 12 3 7 4 14 0 5-4 12-4 9 0 12 6" fill="none" stroke="#8ba2bc" strokeWidth="1.300" />
              <path d="M20 22H9M14 17l-5 5 5 5M35 22h11M41 17l5 5-5 5" fill="none" stroke="#8da0b6" strokeWidth="1.800" />
            </svg>
            <div className="flex h-[24px] flex-1 items-center border border-r-0 border-[#d3e1f1] bg-[#eef4fc] pl-[7px]">
              <ServerGlobeIcon />
              <span className="ml-[9px] h-0 w-0 border-y-[4.500px] border-l-[5px] border-y-transparent border-l-black" />
              <Fit text="DESKTOP-IT5371G" w={126} className="-mt-[2px] ml-[14px] text-[14.500px]" />
              <span className="ml-[14px] h-0 w-0 border-y-[4.500px] border-l-[5px] border-y-transparent border-l-black" />
            </div>
          </div>
          <div className="flex min-h-0 flex-1 bg-[#f0f0f0] pl-[1px] pt-px">
            <Connections />
            <span className="w-[7px] shrink-0" />
            <Features />
          </div>
        </div>
      </div>
    </div>
  );
}
